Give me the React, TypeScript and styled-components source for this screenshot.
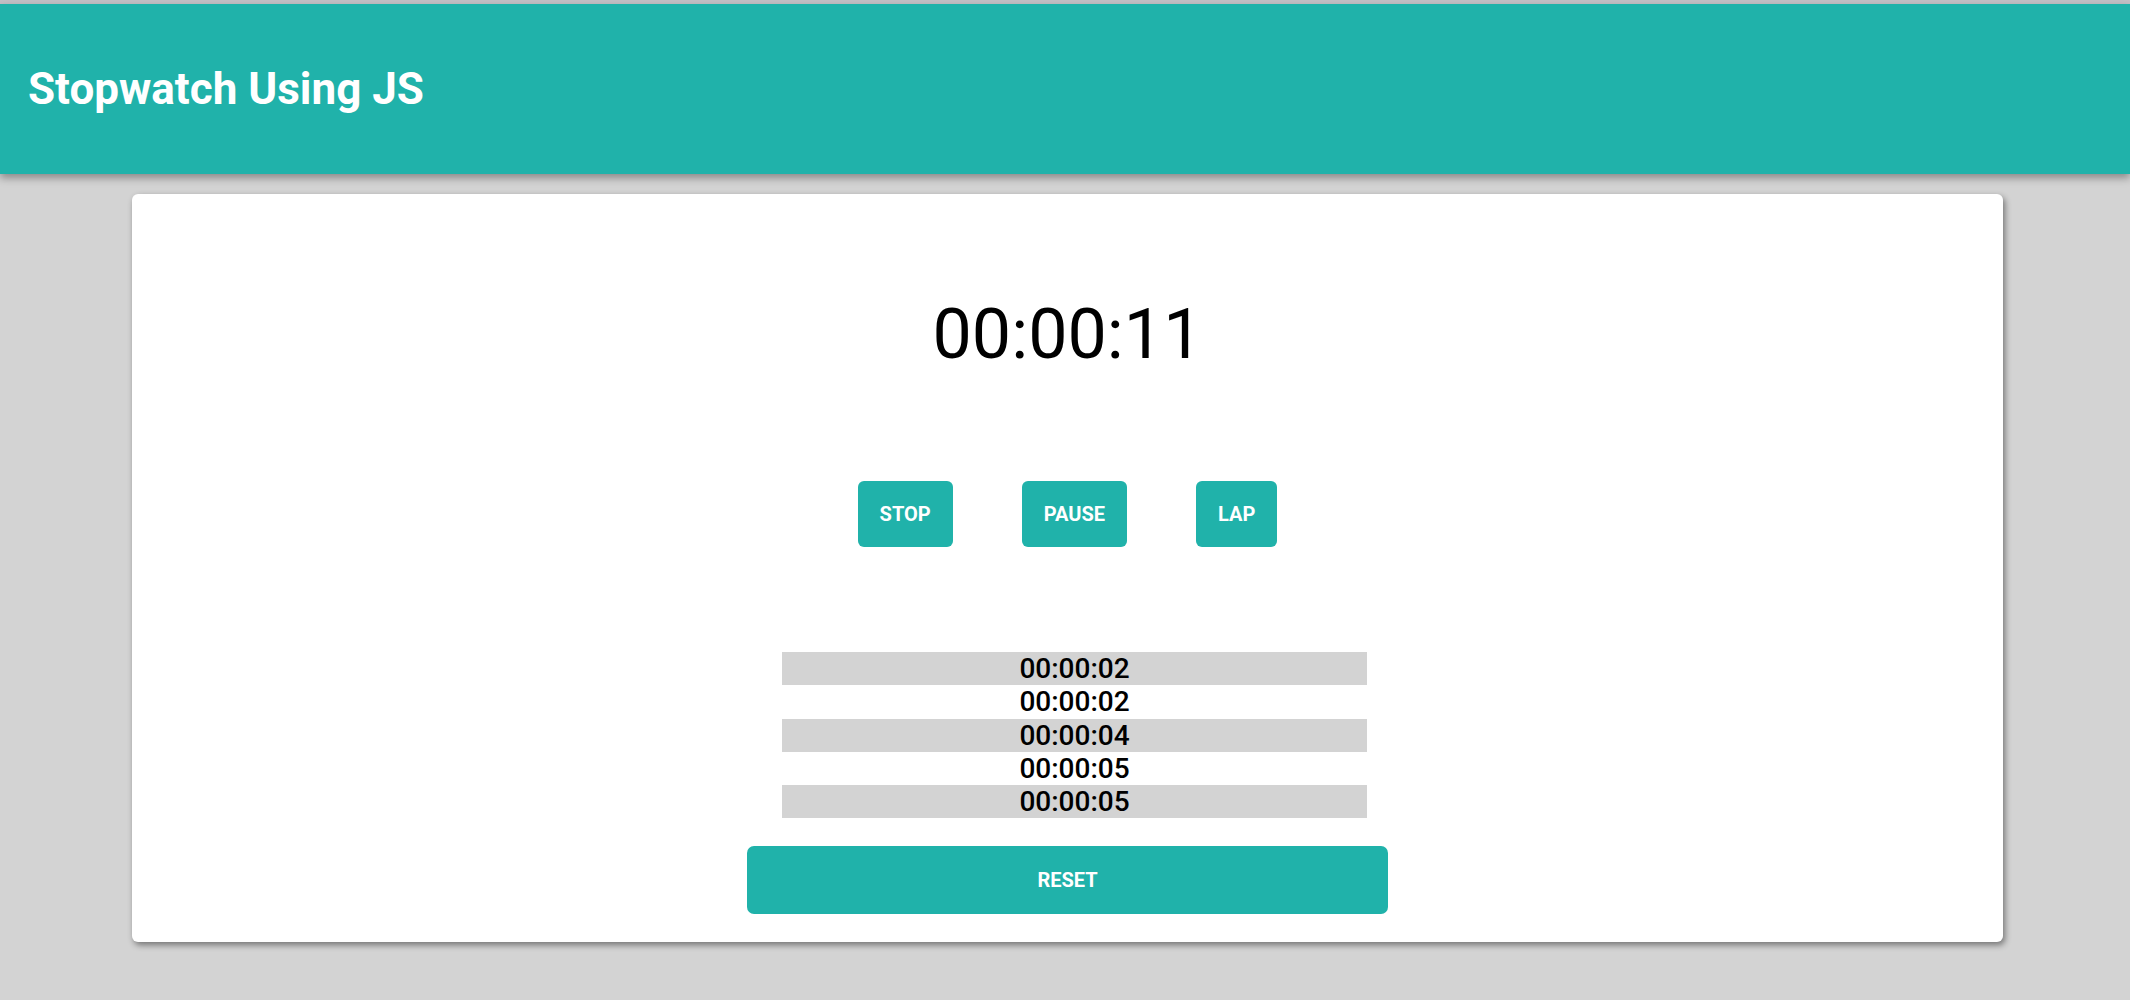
import React from "react";
import styled, { createGlobalStyle } from "styled-components";

const GlobalStyle = createGlobalStyle`
  html, body {
    margin: 0;
    padding: 0;
    background: #d3d3d3;
    font-family: Roboto, "Noto Sans", Arial, sans-serif;
  }
  * { box-sizing: border-box; }
`;

const Page = styled.div`
  min-height: 1000px;
  border-top: 4px solid #c4c0c6;
  display: flex;
  flex-direction: column;
`;

const Header = styled.header`
  height: 170px;
  background: #20b2aa;
  display: flex;
  align-items: center;
  padding-left: 28px;
  box-shadow: 0 4px 8px rgba(0, 0, 0, 0.35);
  position: relative;
  z-index: 1;
`;

const Title = styled.h1`
  margin: 0;
  color: #ffffff;
  font-family: Roboto, sans-serif;
  font-weight: 700;
  font-size: 44px;
  letter-spacing: 0;
`;

const Card = styled.main`
  margin: 20px 127px 0 132px;
  height: 748px;
  background: #ffffff;
  border-radius: 6px;
  box-shadow: 2px 3px 6px rgba(0, 0, 0, 0.45);
  display: flex;
  flex-direction: column;
  align-items: center;
  padding: 105px 0 28px;
`;

const Time = styled.div`
  font-family: Roboto, sans-serif;
  font-size: 70px;
  line-height: 70px;
  height: 70px;
  color: #000000;
`;

const ButtonRow = styled.div`
  margin-top: 112px;
  display: flex;
  gap: 69px;
`;

const ActionButton = styled.button`
  height: 66px;
  padding: 0 22px;
  border: none;
  border-radius: 6px;
  background: #20b2aa;
  color: #ffffff;
  font-family: Roboto, sans-serif;
  font-weight: 700;
  font-size: 20px;
  text-transform: uppercase;
  cursor: pointer;
`;

const Bottom = styled.div`
  margin-top: 105px;
  width: 641px;
  display: flex;
  flex-direction: column;
`;

const LapList = styled.ul`
  list-style: none;
  margin: 0 0 0 35px;
  padding: 0;
  width: 585px;
`;

const LapRow = styled.li<{ $shaded: boolean }>`
  height: 33.3px;
  line-height: 33.3px;
  text-align: center;
  background: ${(p) => (p.$shaded ? "#d3d3d3" : "transparent")};
  font-family: Roboto, sans-serif;
  font-weight: 500;
  font-size: 28px;
  color: #000000;
`;

const ResetButton = styled(ActionButton)`
  margin-top: 28px;
  width: 641px;
  height: 68px;
  border-radius: 7px;
`;

const laps = ["00:00:02", "00:00:02", "00:00:04", "00:00:05", "00:00:05"];

export default function App() {
  return (
    <>
      <GlobalStyle />
      <Page>
        <Header>
          <Title>Stopwatch Using JS</Title>
        </Header>
        <Card>
          <Time>00:00:11</Time>
          <ButtonRow>
            <ActionButton>Stop</ActionButton>
            <ActionButton>Pause</ActionButton>
            <ActionButton>Lap</ActionButton>
          </ButtonRow>
          <Bottom>
            <LapList>
              {laps.map((l, i) => (
                <LapRow key={i} $shaded={i % 2 === 0}>
                  {l}
                </LapRow>
              ))}
            </LapList>
            <ResetButton>Reset</ResetButton>
          </Bottom>
        </Card>
      </Page>
    </>
  );
}
